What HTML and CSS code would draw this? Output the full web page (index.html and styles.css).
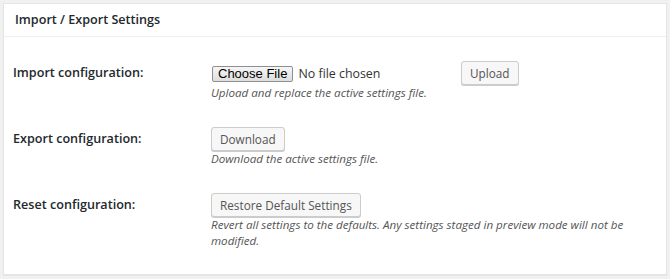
FILE: index.html
```html
<!DOCTYPE html>
<html lang="en">
<head>
    <meta charset="UTF-8">
    <meta name="viewport" content="width=device-width, initial-scale=1.0">
    <title>Import / Export Settings</title>
    <link rel="stylesheet" href="styles.css">
</head>
<body>
    <div class="postbox">
        <h2 class="hndle">Import / Export Settings</h2>
        <div class="inside">
            <div class="row">
                <div class="label">Import configuration:</div>
                <div class="field">
                    <div class="controls">
                        <input type="file" class="file-input">
                        <button type="button" class="button">Upload</button>
                    </div>
                    <p class="description">Upload and replace the active settings file.</p>
                </div>
            </div>
            <div class="row">
                <div class="label">Export configuration:</div>
                <div class="field">
                    <div class="controls">
                        <button type="button" class="button">Download</button>
                    </div>
                    <p class="description">Download the active settings file.</p>
                </div>
            </div>
            <div class="row">
                <div class="label">Reset configuration:</div>
                <div class="field">
                    <div class="controls">
                        <button type="button" class="button">Restore Default Settings</button>
                    </div>
                    <p class="description">Revert all settings to the defaults. Any settings staged in preview mode will not be modified.</p>
                </div>
            </div>
        </div>
    </div>
</body>
</html>
```

FILE: styles.css
```css
body {
    font-family: "Open Sans", "Noto Sans", sans-serif;
    margin: 0;
    padding: 3px;
    background-color: #f1f1f1;
    color: #23282d;
}
.postbox {
    width: 662px;
    background: #fff;
    border: 1px solid #e5e5e5;
    box-shadow: 0 1px 1px rgba(0, 0, 0, 0.04);
}
.hndle {
    margin: 0;
    height: 32px;
    line-height: 32px;
    padding: 0 11px;
    font-size: 12.6px;
    font-weight: 600;
    border-bottom: 1px solid #eee;
}
.inside {
    padding: 24px 9px 25px;
    display: flex;
    flex-direction: column;
    gap: 26px;
}
.row {
    display: flex;
}
.label {
    width: 198px;
    flex-shrink: 0;
    font-size: 12.6px;
    font-weight: 600;
    line-height: 24px;
}
.field {
    width: 430px;
}
.controls {
    display: flex;
    align-items: center;
    height: 24px;
}
.file-input {
    width: 249px;
    font-family: "Open Sans", sans-serif;
    font-size: 12.4px;
    color: #333;
    padding: 0 0 0 1px;
}
.file-input::file-selector-button {
    font-family: "Liberation Sans", Arial, sans-serif;
    font-size: 13px;
    line-height: 14px;
    padding: 0 5px;
    margin-right: 5px;
    border: 1px solid #8f8f8f;
    border-radius: 2px;
    background: linear-gradient(#f6f6f6, #dedede);
    color: #000;
}
.button {
    height: 24px;
    padding: 0 8px;
    font-family: "Open Sans", sans-serif;
    font-size: 11.75px;
    line-height: 22px;
    color: #555;
    background: #f7f7f7;
    border: 1px solid #ccc;
    border-radius: 3px;
    box-shadow: 0 1px 0 #ccc;
    cursor: pointer;
}
.description {
    margin: 0;
    font-size: 11.6px;
    font-style: italic;
    line-height: 16px;
    color: #555;
}
```
